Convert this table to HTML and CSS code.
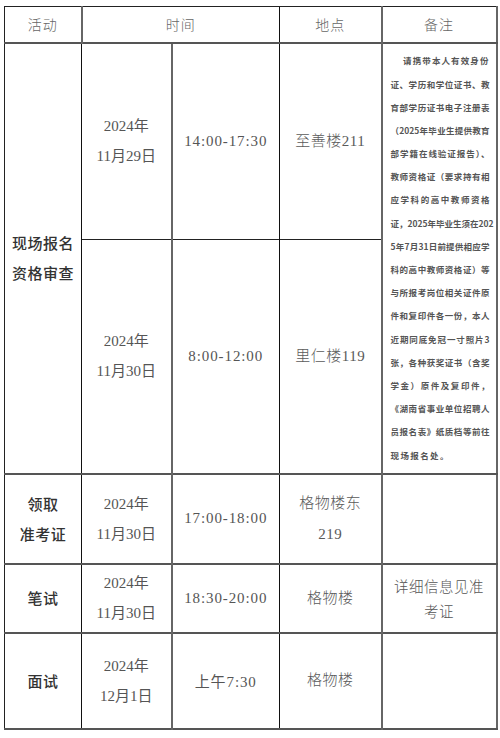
FILE: index.html
```html
<!DOCTYPE html>
<html lang="zh-CN">
<head>
<meta charset="utf-8">
<link rel="stylesheet" href="styles.css">
</head>
<body>
<table class="sched">
  <colgroup>
    <col class="c1"><col class="c2"><col class="c3"><col class="c4"><col class="c5">
  </colgroup>
  <tr class="rh">
    <th class="b-l">活动</th>
    <th colspan="2" class="b-g">时间</th>
    <th class="b-k">地点</th>
    <th class="b-g">备注</th>
  </tr>
  <tr class="r1">
    <td rowspan="2" class="act">现场报名<br>资格审查</td>
    <td class="date b-k">2024年<br>11月29日</td>
    <td class="time b-g">14:00-17:30</td>
    <td class="loc b-k">至善楼211</td>
    <td rowspan="2" class="note b-g">
      <div class="ln first">请携带本人有效身份</div>
      <div class="ln">证、学历和学位证书、教</div>
      <div class="ln">育部学历证书电子注册表</div>
      <div class="ln">（2025年毕业生提供教育</div>
      <div class="ln">部学籍在线验证报告）、</div>
      <div class="ln">教师资格证（要求持有相</div>
      <div class="ln">应学科的高中教师资格</div>
      <div class="ln">证，2025年毕业生须在202</div>
      <div class="ln">5年7月31日前提供相应学</div>
      <div class="ln">科的高中教师资格证）等</div>
      <div class="ln">与所报考岗位相关证件原</div>
      <div class="ln">件和复印件各一份，本人</div>
      <div class="ln">近期同底免冠一寸照片3</div>
      <div class="ln">张，各种获奖证书（含奖</div>
      <div class="ln">学金）原件及复印件，</div>
      <div class="ln">《湖南省事业单位招聘人</div>
      <div class="ln">员报名表》纸质档等前往</div>
      <div class="ln last">现场报名处。</div>
    </td>
  </tr>
  <tr class="r2">
    <td class="date b-k thin-top">2024年<br>11月30日</td>
    <td class="time b-g thin-top">8:00-12:00</td>
    <td class="loc b-k thin-top">里仁楼119</td>
  </tr>
  <tr class="r3">
    <td class="act">领取<br>准考证</td>
    <td class="date b-k">2024年<br>11月30日</td>
    <td class="time b-g">17:00-18:00</td>
    <td class="loc b-k">格物楼东<br>219</td>
    <td class="note b-g"></td>
  </tr>
  <tr class="r4">
    <td class="act">笔试</td>
    <td class="date b-k">2024年<br>11月30日</td>
    <td class="time b-g">18:30-20:00</td>
    <td class="loc b-k">格物楼</td>
    <td class="memo b-g">详细信息见准<br>考证</td>
  </tr>
  <tr class="r5">
    <td class="act">面试</td>
    <td class="date b-k">2024年<br>12月1日</td>
    <td class="time b-g">上午7:30</td>
    <td class="loc b-k">格物楼</td>
    <td class="note b-g"></td>
  </tr>
</table>
</body>
</html>
```

FILE: styles.css
```css
html, body {
  margin: 0;
  padding: 0;
  background: #ffffff;
}

body {
  padding: 6px 0 0 4px;
  font-family: "Liberation Serif", "Noto Sans CJK SC", serif;
  color: #444;
}

.sched {
  border-collapse: collapse;
  table-layout: fixed;
  width: 492px;
  border-top: 1px solid #222;
  border-left: 1px solid #222;
  border-right: 2px solid #666;
  border-bottom: 2px solid #555;
}

.c1 { width: 77px; }
.c2 { width: 90px; }
.c3 { width: 108px; }
.c4 { width: 102px; }
.c5 { width: 115px; }

.sched th,
.sched td {
  padding: 0;
  text-align: center;
  vertical-align: middle;
  border-top: 2px solid #555;
  border-left: 1px solid #222;
}

.sched th {
  font-family: "Noto Sans CJK SC", sans-serif;
  font-weight: 300;
  font-size: 14px;
  color: #666;
  letter-spacing: 1px;
  border-top: 1px solid #222;
}

.b-k { border-left: 1px solid #111 !important; }
.b-g { border-left: 2px solid #666 !important; }
.sched .thin-top { border-top: 1px solid #222; }

.rh { height: 36px; }
.r1 { height: 197px; }
.r2 { height: 234px; }
.r3 { height: 90px; }
.r4 { height: 69px; }
.r5 { height: 96px; }

.act {
  font-family: "Noto Sans CJK SC", sans-serif;
  font-weight: 500;
  font-size: 15px;
  line-height: 30px;
  color: #333;
  letter-spacing: 0.5px;
}

.date {
  font-size: 15px;
  line-height: 30px;
  color: #555;
}

.time {
  font-size: 15px;
  letter-spacing: 0.9px;
  color: #555;
}

.loc {
  font-size: 15px;
  line-height: 31px;
  color: #5a5a5a;
  font-weight: 300;
  letter-spacing: 0.5px;
}

.memo {
  font-family: "Noto Sans CJK SC", sans-serif;
  font-weight: 300;
  font-size: 14.5px;
  line-height: 25px;
  color: #555;
  letter-spacing: 0.5px;
}

.note {
  padding: 0 6px 0 8px !important;
  text-align: left;
}

.ln {
  font-family: "Noto Sans CJK SC", sans-serif;
  font-weight: 700;
  font-size: 8.5px;
  line-height: 23.2px;
  height: 23.2px;
  color: #555;
  text-align: justify;
  text-align-last: justify;
  white-space: nowrap;
}

.ln.first {
  text-align: right;
  text-align-last: right;
  letter-spacing: 1.1px;
}

.ln.last {
  text-align: left;
  text-align-last: left;
  letter-spacing: 1.4px;
}
```
